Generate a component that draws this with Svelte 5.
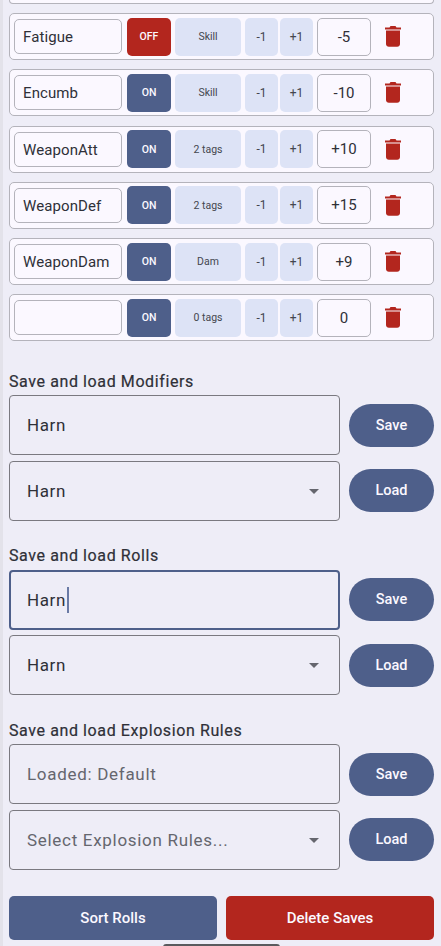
<script>
	const rows = [
		{ name: 'Fatigue', on: false, tag: 'Skill', value: '-5' },
		{ name: 'Encumb', on: true, tag: 'Skill', value: '-10' },
		{ name: 'WeaponAtt', on: true, tag: '2 tags', value: '+10' },
		{ name: 'WeaponDef', on: true, tag: '2 tags', value: '+15' },
		{ name: 'WeaponDam', on: true, tag: 'Dam', value: '+9' },
		{ name: '', on: true, tag: '0 tags', value: '0' }
	];

	const sections = [
		{ title: 'Save and load Modifiers', input: 'Harn', select: 'Harn' },
		{ title: 'Save and load Rolls', input: 'Harn', select: 'Harn', focused: true },
		{ title: 'Save and load Explosion Rules', input: 'Loaded: Default', select: 'Select Explosion Rules...', hint: true }
	];
</script>

<div class="page">
	<div class="stub"></div>

	<div class="rows">
		{#each rows as row}
			<div class="row">
				<div class="name">{row.name}</div>
				<button class="toggle" class:off={!row.on}>{row.on ? 'ON' : 'OFF'}</button>
				<button class="soft tag">{row.tag}</button>
				<button class="soft step">-1</button>
				<button class="soft step">+1</button>
				<div class="value">{row.value}</div>
				<svg class="trash" viewBox="0 0 16 21" width="16" height="21">
					<path d="M5.5 0h5l1 1.5H16v2H0v-2h4.5z" fill="#b3261e" />
					<path d="M1 4.4h14V18c0 1.6-1.2 2.8-2.8 2.8H3.800C2.200 20.800 1 19.600 1 18z" fill="#b3261e" />
				</svg>
			</div>
		{/each}
	</div>

	{#each sections as s}
		<section>
			<h2>{s.title}</h2>
			<div class="line">
				<div class="field" class:focused={s.focused} class:hint={s.hint}>
					<span>{s.input}</span>{#if s.focused}<i class="caret"></i>{/if}
				</div>
				<button class="pill">Save</button>
			</div>
			<div class="line">
				<div class="field" class:hint={s.hint}>
					<span>{s.select}</span>
					<b class="arrow"></b>
				</div>
				<button class="pill">Load</button>
			</div>
		</section>
	{/each}

	<div class="actions">
		<button class="wide">Sort Rolls</button>
		<button class="wide danger">Delete Saves</button>
	</div>

	<div class="handle"></div>
</div>

<style>
	:global(body) {
		margin: 0;
		background: #eeedf7;
	}

	.page {
		position: relative;
		box-sizing: border-box;
		width: 441px;
		height: 946px;
		overflow: hidden;
		padding: 0 7px 0 6px;
		background: #eeedf7;
		border-left: 3px solid #e3e2ea;
		font-family: Roboto, "Liberation Sans", sans-serif;
		color: #2f3038;
	}

	.stub {
		height: 3.500px;
		box-sizing: border-box;
		background: #fbf8ff;
		border: 1px solid #b4b3bb;
		border-top: 0;
		border-radius: 0 0 5px 5px;
	}

	.rows {
		display: flex;
		flex-direction: column;
		gap: 9.300px;
		margin-top: 9.500px;
	}

	.row {
		box-sizing: border-box;
		height: 47px;
		display: flex;
		align-items: center;
		padding: 0 4px;
		background: #fbf8ff;
		border: 1px solid #b4b3bb;
		border-radius: 5px;
	}

	.name {
		box-sizing: border-box;
		width: 108px;
		height: 35px;
		line-height: 34px;
		padding-left: 8px;
		font-size: 15px;
		letter-spacing: 0.1px;
		border: 1px solid #b4b3bb;
		border-radius: 5px;
	}

	button {
		border: 0;
		padding: 0;
		font-family: inherit;
	}

	.toggle {
		width: 44px;
		height: 38px;
		margin-left: 5px;
		border-radius: 5px;
		background: #4e5f8a;
		color: #fbf8ff;
		font-size: 10.500px;
		font-weight: 500;
	}

	.toggle.off {
		background: #b3261e;
	}

	.soft {
		height: 38px;
		border-radius: 5px;
		background: #dde3f6;
		color: #44464f;
	}

	.tag {
		width: 66px;
		margin-left: 4px;
		font-size: 10.500px;
	}

	.step {
		width: 33px;
		margin-left: 4px;
		font-size: 12px;
	}

	.step + .step {
		margin-left: 2px;
	}

	.value {
		box-sizing: border-box;
		width: 54px;
		height: 38px;
		margin-left: 4px;
		line-height: 36px;
		text-align: center;
		font-size: 15px;
		border: 1px solid #b4b3bb;
		border-radius: 5px;
	}

	.trash {
		margin-left: 14px;
	}

	section {
		margin-top: 25.700px;
	}

	.rows + section {
		margin-top: 30.500px;
	}

	h2 {
		margin: 0 0 4.500px;
		font-size: 16px;
		font-weight: 400;
		line-height: 19px;
		letter-spacing: 0.6px;
		color: #2f3038;
		-webkit-text-stroke: 0.2px #2f3038;
	}

	.line {
		display: flex;
		align-items: center;
		gap: 9px;
	}

	.line + .line {
		margin-top: 5.300px;
	}

	.field {
		box-sizing: border-box;
		position: relative;
		display: flex;
		align-items: center;
		width: 331px;
		height: 60px;
		padding-left: 17px;
		font-size: 17px;
		letter-spacing: 0.6px;
		border: 1px solid #7a7980;
		border-radius: 4px;
	}

	.field.focused {
		border: 2px solid #4e5f8a;
		padding-left: 16px;
	}

	.field.hint {
		color: #65666e;
		letter-spacing: 0.7px;
	}

	.caret {
		width: 2px;
		height: 26px;
		margin-left: 1px;
		background: #6a7aa5;
	}

	.arrow {
		position: absolute;
		right: 20px;
		top: 27px;
		border: 5px solid transparent;
		border-top-color: #65666e;
		border-bottom: 0;
	}

	.pill {
		width: 85px;
		height: 43px;
		border-radius: 22px;
		background: #4e5f8a;
		color: #fbf8ff;
		font-size: 14.500px;
		font-weight: 500;
	}

	.actions {
		display: flex;
		gap: 9px;
		margin-top: 26.500px;
	}

	.wide {
		flex: 1;
		height: 44px;
		border-radius: 5px;
		background: #4e5f8a;
		color: #fbf8ff;
		font-size: 15px;
		font-weight: 500;
	}

	.wide.danger {
		background: #b3261e;
	}

	.handle {
		position: absolute;
		left: 160px;
		bottom: -2px;
		width: 117px;
		height: 4px;
		border-radius: 3px 3px 0 0;
		background: #5a5a5e;
	}
</style>
